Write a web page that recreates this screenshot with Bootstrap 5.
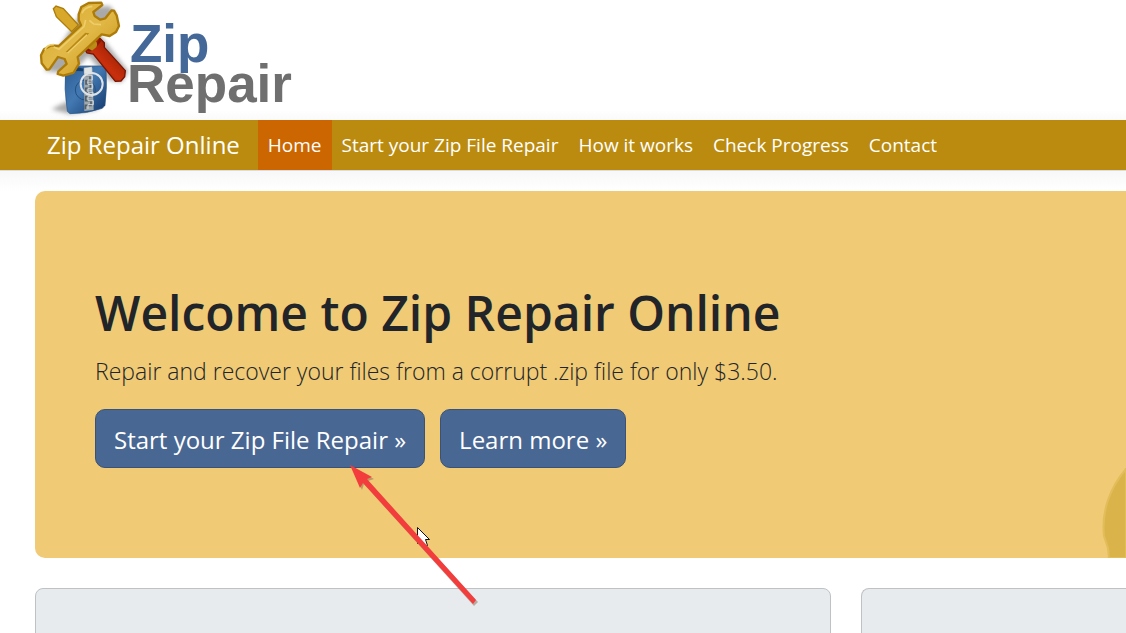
<!DOCTYPE html>
<html lang="en">
<head>
<meta charset="utf-8">
<meta name="viewport" content="width=device-width, initial-scale=1">
<title>Zip Repair Online</title>
<link href="https://cdn.jsdelivr.net/npm/bootstrap@5.3.0/dist/css/bootstrap.min.css" rel="stylesheet">
<style>
  body { font-family: "Open Sans", "Noto Sans", sans-serif; color: #212529; background: #fff; }
  .site-head { padding-left: 30px; background: linear-gradient(#fff 92%, #fafafa); }
  .site-nav { background: #bb8b0f; padding: 0; min-height: 50px; box-shadow: 0 1px 0 #dcdde2; }
  .site-nav .navbar-brand { color: #fff; font-size: 24px; line-height: 50px; padding: 0; margin: 0 18px 0 47px; }
  .site-nav .navbar-nav .nav-link { color: #fff; font-size: 19px; line-height: 50px; padding: 0 10px; }
  .site-nav .navbar-nav .nav-link.active { background: #cc6600; color: #fff; }
  .nav-shade { height: 21px; background: linear-gradient(#f7f7f8, #fff); }
  .page-body { padding-left: 35px; }
  .hero { background: #f0ca74; border-radius: 10px 0 0 10px; padding: 92px 60px 90px; margin-bottom: 30px; }
  .hero h1 { font-size: 48px; font-weight: 600; line-height: 60px; margin-bottom: 10px; }
  .hero-text { font-size: 23px; font-weight: 300; line-height: 36px; margin-bottom: 20px; }
  .hero-actions { gap: 15px; }
  .hero .btn { background: #496793; border: 1px solid #3a5278; color: #fff; font-size: 24px; line-height: 37px; padding: 11px 18px 9px; border-radius: 10px; }
  .hero-mark { right: 0; bottom: 0; }
  .panels { display: grid; grid-template-columns: 3fr 1fr; gap: 30px; }
  .panel { background: #e7ebee; border: 1px solid #bfc2c5; border-radius: 8px; min-height: 180px; }
  .panel-end { border-right: 0; border-radius: 8px 0 0 8px; }
  .pointer { left: 340px; top: 264px; z-index: 2; pointer-events: none; }
  .clip-page { height: 100vh; overflow: hidden; }
</style>
</head>
<body>
<div class="clip-page">
<header class="site-head">
  <svg class="d-block" width="290" height="120" viewBox="0 0 290 120" role="img" aria-label="Zip Repair">
    <defs>
      <linearGradient id="gold" x1="0" y1="0" x2="1" y2="1"><stop offset="0" stop-color="#d9ab2c"/><stop offset=".5" stop-color="#e2b948"/><stop offset="1" stop-color="#c48f10"/></linearGradient>
      <linearGradient id="red" x1="0" y1="1" x2="1" y2="0"><stop offset="0" stop-color="#7d1200"/><stop offset=".45" stop-color="#c9300c"/><stop offset="1" stop-color="#7c1400"/></linearGradient>
      <linearGradient id="blue" x1="0" y1="0" x2="1" y2="1"><stop offset="0" stop-color="#2c5c92"/><stop offset=".45" stop-color="#4379b2"/><stop offset="1" stop-color="#12366a"/></linearGradient>
      <filter id="soft" x="-20%" y="-20%" width="140%" height="140%"><feGaussianBlur stdDeviation="6"/></filter>
    </defs>
    <g transform="scale(.3333)">
      <g fill="#555" opacity=".5" filter="url(#soft)">
        <path d="M64 328l50-25 100 12-14 15-80 12z"/>
        <path d="M165 20l75-2 18 28-10 32-45 18 92 118-20 33-35-5-65-74-52 54-80-10z"/>
      </g>
      <path d="M107 203q-6 64 5 131l8 7q50 1 97-16l8-9q7-54 3-111l-8-7q-56-1-107 1z" fill="url(#blue)" stroke="#2b5686" stroke-width="2"/>
      <path d="M106 208q32-10 54-2l-1 8q-27-4-53 5z" fill="#173e6b"/>
      <circle cx="166" cy="270" r="30" fill="none" stroke="#234f80" stroke-width="3"/>
      <path d="M162 204h25l4 126-28 3z" fill="#9fa8ad"/>
      <path d="M164 226l16 1v15h-12v10h13v13h-14v12h15v13h-15v12h16v14h-17v12" fill="none" stroke="#53606a" stroke-width="5"/>
      <path d="M169 227h18v13h-13v13h14v12h-14v12h15v12h-15v13h16v12h-16v13" fill="none" stroke="#d6dadd" stroke-width="3"/>
      <path d="M162 203l24-3 1 20-25 3z" fill="#e1e4e5" stroke="#777"/>
      <circle cx="185" cy="252" r="33" fill="none" stroke="#dfe3e6" stroke-width="6"/>
      <path d="M70 26l8-8 22 8 45 49-20 20-46-45z" fill="#d7a829" stroke="#ad7c09" stroke-width="4"/>
      <path d="M163 145l30-29 17-1 13 13v14l63 70-2 18-11 13-17 1-66-82-19-3z" fill="url(#red)" stroke="#791400" stroke-width="4"/>
      <path d="M165 143q12 15 27-1 15-14 20-25" fill="none" stroke="#8c1900" stroke-width="8"/>
      <path d="M190 119q17 7 9 23l-13 10-16-10z" fill="#b98b17"/>
      <path d="M146 43l8-22 22-12 38-1 3 7-27 21 4 12 17 11 15-4 19-24 7 1 8 14 7 32-9 18-19 12-24-5-72 68 4 20-17 28-30 8-17-5 2-8 25-22-6-15-20-6-26 37-8 1-15-19-2-24 9-18 23-12 21 2 67-62-7-16z" fill="url(#gold)" stroke="#ad7b08" stroke-width="7" stroke-linejoin="round"/>
      <path d="M156 40q6-18 31-21M178 61l13 11 22 2M71 141l16 7 75-68 5-20M45 151q5-18 27-17" fill="none" stroke="#edce6a" stroke-width="5"/>
      <path d="M107 156l59-58 12 2-62 57z" fill="#b88812"/>
      <path d="M113 159l58-55" stroke="#f0d06c" stroke-width="4"/>
    </g>
    <g font-family="'Liberation Sans', Arial, sans-serif" font-weight="700" font-size="53">
      <text x="100" y="62" fill="#446998">Zip</text>
      <text x="97" y="102" fill="#6f6f6f">Repair</text>
    </g>
  </svg>
</header>
<nav class="navbar navbar-expand site-nav" aria-label="Main">
  <a class="navbar-brand" href="#">Zip Repair Online</a>
  <ul class="navbar-nav">
    <li class="nav-item"><a class="nav-link active" aria-current="page" href="#">Home</a></li>
    <li class="nav-item"><a class="nav-link" href="#">Start your Zip File Repair</a></li>
    <li class="nav-item"><a class="nav-link" href="#">How it works</a></li>
    <li class="nav-item"><a class="nav-link" href="#">Check Progress</a></li>
    <li class="nav-item"><a class="nav-link" href="#">Contact</a></li>
  </ul>
</nav>
<div class="nav-shade"></div>
<main class="page-body position-relative">
  <section class="hero position-relative">
    <h1>Welcome to Zip Repair Online</h1>
    <p class="hero-text">Repair and recover your files from a corrupt .zip file for only $3.50.</p>
    <div class="d-flex hero-actions">
      <button type="button" class="btn">Start your Zip File Repair »</button>
      <button type="button" class="btn">Learn more »</button>
    </div>
    <svg class="hero-mark position-absolute" width="24" height="90" viewBox="0 0 24 90" aria-hidden="true">
      <path d="M24 1Q12 15 6 32Q0 50 2 68L6 80L7 90H24Z" fill="#dab44b" stroke="#e2bd59" stroke-width="2"/>
    </svg>
  </section>
  <section class="panels">
    <div class="panel"></div>
    <div class="panel panel-end"></div>
  </section>
  <svg class="pointer position-absolute" width="150" height="160" viewBox="340 455 150 160" aria-hidden="true">
    <path d="M417.500 527.500v16l4-3 3 6 3-1-2-6h4z" fill="#fff" stroke="#111"/>
    <path d="M351 466L373 478L367 480L477 601L473 605L363 483L361 489Z" transform="translate(1 1)" fill="#8b6b55" opacity=".5"/>
    <path d="M350 465L372 477L367 479L476 600L473 604L363 483L360 488Z" fill="#f33d3c"/>
  </svg>
</main>
</div>
<script src="https://cdn.jsdelivr.net/npm/bootstrap@5.3.0/dist/js/bootstrap.bundle.min.js"></script>
</body>
</html>
